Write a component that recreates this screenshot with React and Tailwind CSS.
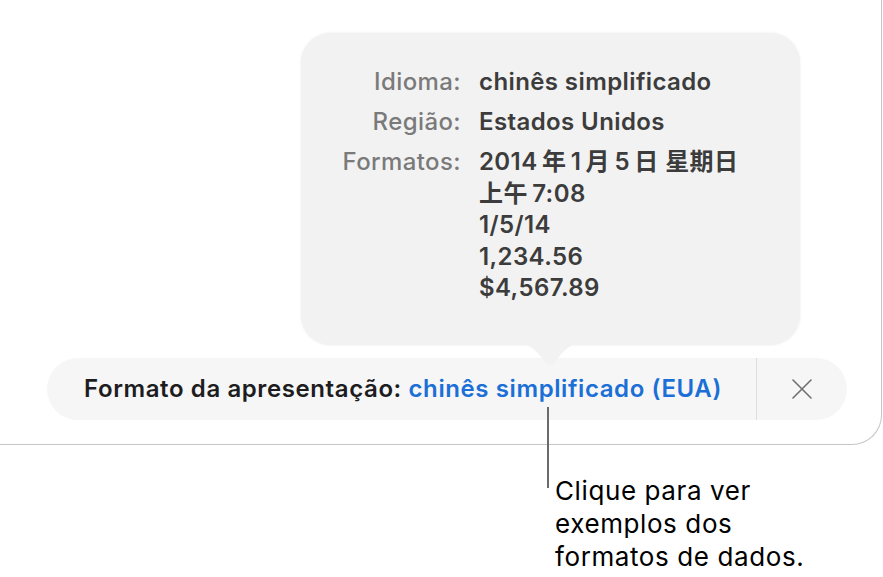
import React from 'react';

const rows = [
  { label: 'Idioma:', lines: ['chinês simplificado'] },
  { label: 'Região:', lines: ['Estados Unidos'] },
  { label: 'Formatos:', lines: ['2014\u2006年\u20061\u2006月\u20065\u2006日 星期日', '上午\u20067:08', '1/5/14', '1,234.56', '$4,567.89'] },
];

// Preview bubble showing sample formats for the chosen region
const FormatPopover = () => (
  <div className="absolute left-[301px] top-[33px] w-[499px] h-[312px]">
    <div className="w-full h-full rounded-[30px] bg-[#f2f2f2] shadow-[0_0_3px_rgba(0,0,0,0.08)] pt-[33px] flex flex-col gap-[8px]">
      {rows.map((row) => (
        <div key={row.label} className="flex">
          <div className="w-[160px] shrink-0 text-right text-[24px] leading-[32px] font-medium tracking-[0.4px] text-[#7a7a7a]">{row.label}</div>
          <div className="pl-[18px] flex flex-col text-[24px] leading-[31.5px] font-semibold tracking-[0.4px] text-[#3c3c3c] whitespace-pre">
            {row.lines.map((line) => (
              <span key={line}>{line}</span>
            ))}
          </div>
        </div>
      ))}
    </div>
    <svg className="absolute left-[220px] top-[310px]" width="58" height="24" viewBox="0 0 58 24">
      <path d="M0 0 H58 C48 2 42 8 34 19 Q29 25 24 19 C16 8 10 2 0 0 Z" fill="#f2f2f2" />
    </svg>
  </div>
);

export default function App() {
  return (
    <div className="relative w-[883px] h-[577px] bg-white overflow-hidden font-['Inter','Noto_Sans_CJK_SC',sans-serif]">
      <div className="relative w-[882px] h-[445px] border-r border-b border-[#c6c6c6] rounded-br-[30px] pt-[358px] pl-[47px]">
        <div className="flex items-center w-[800px] h-[62px] rounded-full bg-[#f6f6f6]">
          <div className="flex-1 pl-[37px] text-[24px] font-semibold text-[#1d1d1f] tracking-[0.6px] whitespace-nowrap">
            Formato da apresentação: <span className="text-[#1b6fd6]">chinês simplificado (EUA)</span>
          </div>
          <div className="w-px h-full bg-[#dedede]" />
          <div className="w-[90px] flex justify-center">
            <svg width="20" height="20" viewBox="0 0 20 20" fill="none" stroke="#6f6f6f" strokeWidth="1.6" strokeLinecap="round">
              <path d="M1 1 L19 19 M19 1 L1 19" />
            </svg>
          </div>
        </div>
        <FormatPopover />
      </div>
      {/* callout line and caption */}
      <div className="absolute left-[547px] top-[407px] w-[2px] h-[81px] bg-[#6b6b6b]" />
      <div className="pl-[555px] pt-[29px] text-[26px] leading-[33px] tracking-[0.6px] text-black">
        <div>Clique para ver</div>
        <div>exemplos dos</div>
        <div>formatos de dados.</div>
      </div>
    </div>
  );
}
